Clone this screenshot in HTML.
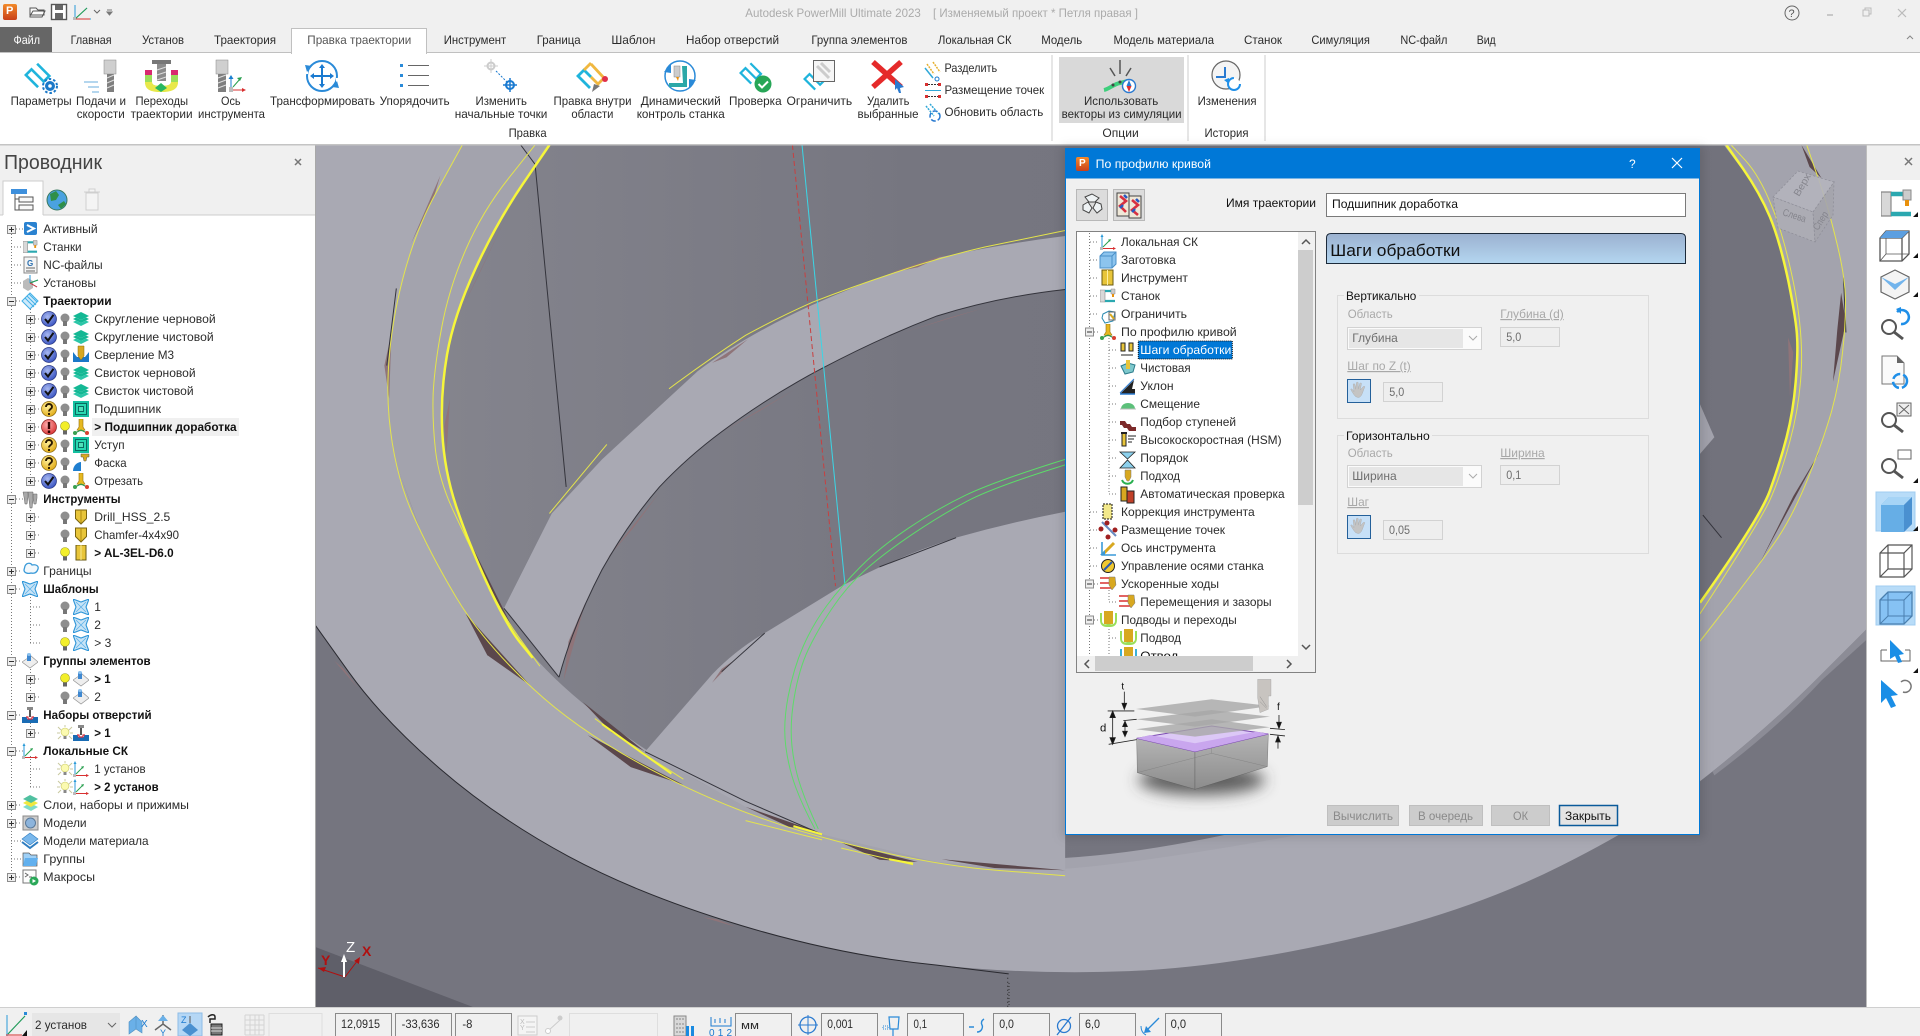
<!DOCTYPE html>
<html lang="ru"><head><meta charset="utf-8"><title>PowerMill</title>
<style>
html,body{margin:0;padding:0;background:#f0f0f0;overflow:hidden}
svg{display:block}
text{font:12px "Liberation Sans","Noto Sans CJK SC",sans-serif;fill:#2b2b2b}
.b{font-weight:bold;fill:#111}
.g{fill:#a8a8a8}
.d{fill:#6e6e6e}
.u{text-decoration:underline}
.n{vector-effect:non-scaling-stroke;fill:none}
.dot{fill:none;stroke:#777;stroke-dasharray:1 2}
</style></head><body>
<svg xmlns="http://www.w3.org/2000/svg" width="1920" height="1036" viewBox="0 0 1920 1036">
<defs>
<linearGradient id="gh" x1="0" y1="0" x2="0" y2="1"><stop offset="0" stop-color="#9bb1d0"/><stop offset="1" stop-color="#b4d6f0"/></linearGradient>
<linearGradient id="wl" x1="0" y1="0" x2="1" y2="0"><stop offset="0" stop-color="#84848d"/><stop offset=".35" stop-color="#767680"/><stop offset="1" stop-color="#72727c"/></linearGradient>
<linearGradient id="bxf" x1="0" y1="0" x2="0" y2="1"><stop offset="0" stop-color="#b4b4b4"/><stop offset="1" stop-color="#8c8c8c"/></linearGradient>
<linearGradient id="pi" x1="0" y1="0" x2="0" y2="1"><stop offset="0" stop-color="#f28a2a"/><stop offset="1" stop-color="#c8401a"/></linearGradient>
<radialGradient id="bl" cx=".4" cy=".35" r=".7"><stop offset="0" stop-color="#a8b8f0"/><stop offset="1" stop-color="#3550c0"/></radialGradient>
<radialGradient id="yl" cx=".4" cy=".35" r=".7"><stop offset="0" stop-color="#fff09a"/><stop offset="1" stop-color="#e0a810"/></radialGradient>
<radialGradient id="rd" cx=".4" cy=".35" r=".7"><stop offset="0" stop-color="#ffb0b0"/><stop offset="1" stop-color="#d83030"/></radialGradient>
<filter id="bb" x="-30%" y="-50%" width="160%" height="200%"><feGaussianBlur stdDeviation="5"/></filter>
<filter id="bb2" x="-40%" y="-80%" width="180%" height="260%"><feGaussianBlur stdDeviation="22"/></filter>
<symbol id="pl" viewBox="0 0 9 9"><rect x=".5" y=".5" width="8" height="8" fill="#eee" stroke="#8c8c8c"/><path d="M2 4.5h5M4.5 2v5" stroke="#333"/></symbol>
<symbol id="mn" viewBox="0 0 9 9"><rect x=".5" y=".5" width="8" height="8" fill="#eee" stroke="#8c8c8c"/><path d="M2 4.5h5" stroke="#333"/></symbol>
<symbol id="ck" viewBox="0 0 16 16"><circle cx="8" cy="8" r="7.5" fill="url(#bl)" stroke="#27357f" stroke-width=".7"/><path d="M4 8l3 3.5L12.500 3.800" fill="none" stroke="#111" stroke-width="2"/></symbol>
<symbol id="qq" viewBox="0 0 16 16"><circle cx="8" cy="8" r="7.500" fill="url(#yl)" stroke="#8a6a10" stroke-width=".7"/><path d="M5 6c0-4 6-4 6 0 0 2-3 2-3 4.500M8 12v2" fill="none" stroke="#2a1a00" stroke-width="1.900"/></symbol>
<symbol id="ex" viewBox="0 0 16 16"><circle cx="8" cy="8" r="7.500" fill="url(#rd)" stroke="#8a2020" stroke-width=".7"/><path d="M8 3v7M8 11.500v2.500" stroke="#300" stroke-width="2.400"/></symbol>
<symbol id="bg" viewBox="0 0 10 14"><circle cx="5" cy="5" r="4.500" fill="#8e8e8e"/><path d="M3 8h4v5H3z" fill="#777"/></symbol>
<symbol id="by" viewBox="0 0 10 14"><circle cx="5" cy="5" r="4.500" fill="#f2ee2a" stroke="#9a9a20" stroke-width=".6"/><path d="M3 9.500h4v4H3z" fill="#666"/></symbol>
<symbol id="sn" viewBox="0 0 16 16"><path d="M1 2l3 3M15 2l-3 3M0 8h3M13 8h3M1 14l3-3M15 14l-3-3M8 0v2" stroke="#c9c9a0"/><circle cx="8" cy="7" r="4" fill="#fbfab0" stroke="#c4c460" stroke-width=".6"/><path d="M6.500 11h3v3h-3z" fill="#888"/></symbol>
<symbol id="ly" viewBox="0 0 16 16"><path d="M8 1l8 4-8 4-8-4z" fill="#14b894"/><path d="M0 8l3-1.500L8 9l5-2.500L16 8l-8 4z" fill="#14b894"/><path d="M0 11l3-1.500L8 12l5-2.500 3 1.500-8 4z" fill="#2bc6a8"/></symbol>
<symbol id="sq" viewBox="0 0 16 16"><rect width="16" height="16" fill="#14c0a0"/><rect x="2.500" y="2.500" width="11" height="11" fill="#28d8b0" stroke="#0a6a60"/><rect x="5.500" y="5.500" width="5" height="5" fill="#50e0b8" stroke="#0a6a60"/></symbol>
<symbol id="cv" viewBox="0 0 16 16"><path d="M6 0h4v8l2 3-4 1-4-1 2-3z" fill="#e6b820" stroke="#94700c" stroke-width=".6"/><path d="M8 11L2 14M8 11l6 3" stroke="#2a9a50" stroke-width="1.200"/><circle cx="2" cy="14" r="2" fill="#3aa050"/><circle cx="14" cy="14" r="2" fill="#d84030"/></symbol>
<symbol id="tt" viewBox="0 0 14 16"><path d="M1.500 1h11v8.500L7 15 1.500 9.500z" fill="#e8c53a" stroke="#7a6410"/><path d="M7 1v13" stroke="#b08a10"/></symbol>
<symbol id="tf" viewBox="0 0 14 16"><rect x="2" y="0" width="10" height="15" fill="#e8c53a" stroke="#6a5a10"/><path d="M7 0v15" stroke="#f6e690"/></symbol>
<symbol id="xx" viewBox="0 0 16 16"><path d="M0 0l8 3 8-3-3 8 3 8-8-3-8 3 3-8z" fill="#c8e4f6" stroke="#2f96d8" stroke-width="1.100"/><path d="M3 3l10 10M13 3L3 13" stroke="#5cb0e8" stroke-width=".8"/></symbol>
<symbol id="fe" viewBox="0 0 16 16"><path d="M0 9l9-6 7 6-8 6z" fill="#eee" stroke="#999" stroke-width=".7"/><path d="M5 1h4v7H5z" fill="#3f88d0"/><ellipse cx="7" cy="1.500" rx="2" ry="1.500" fill="#8cc0ec"/></symbol>
<symbol id="hs" viewBox="0 0 16 16"><path d="M5 0h6v3H5z" fill="#888"/><path d="M7 3h2v7H7z" fill="#555"/><path d="M0 10h5v2h6v-2h5v6H0z" fill="#1a6cb4"/><path d="M4 10h2v2h4v-2h2" stroke="#d83040" stroke-width="1.200" fill="none"/></symbol>
<symbol id="cs" viewBox="0 0 16 16"><path d="M2 13V1" stroke="#2a9ad8"/><path d="M2 0l-1.500 3h3z" fill="#2a9ad8"/><path d="M3 13l7-7" stroke="#2aa050"/><path d="M11 5l-3 .8 2 2z" fill="#2aa050"/><path d="M3 14.500h11" stroke="#d83030"/><path d="M16 14.500l-3-1.500v3z" fill="#d83030"/><rect x="0" y="13" width="3" height="3" fill="#bbb"/></symbol>
<symbol id="zz" viewBox="0 0 32 32"><path d="M15 29L2 16 8 10 21 23 27 17 14 4" fill="none" stroke="#1fb4dc" stroke-width="2.800"/></symbol>
<symbol id="ml" viewBox="0 0 16 16"><path d="M0 2h5v12H0z" fill="#d8d8d8" stroke="#888" stroke-width=".6"/><path d="M5 3h8M5 13h10" stroke="#2ba8b0" stroke-width="2.200"/><path d="M11 1h4v5h-4z" fill="#ccc" stroke="#888" stroke-width=".5"/><path d="M12 6h2v3h-2z" fill="#e8900c"/></symbol>
<symbol id="hd" viewBox="0 0 24 24"><path d="M8 20c-3-3-5-7-6-9 1-1 2 0 4 3L5 5c1-1 2 0 2 0l1 6 1-8c1-1 2 0 2 0v8l2-7c1-1 2 0 2 0l-1.500 8L17 8c1-1 2 0 2 0l-3 8c-1 3-3 5-5 5z" fill="#c4c4c4" stroke="#aaa" stroke-width=".5"/></symbol>
</defs>

<!-- 3D SCENE -->
<rect x="315" y="145" width="1551" height="862" fill="#75757f"/>
<svg x="315" y="145" width="1551" height="862" viewBox="0 0 3242 1563" preserveAspectRatio="none">
<rect width="3242" height="1563" fill="#75757f"/>
<path d="M0,1454L0,1563L330,1563Z" fill="#5f5f69"/>
<path d="M0,0H3242V879L3144,964Q3047,1049 2921,1136Q2796,1224 2604,1307Q2412,1391 2157,1441Q1902,1491 1701,1498Q1500,1505 1300,1487Q1100,1470 890,1415Q680,1360 530,1290Q380,1220 260,1130Q140,1040 70,955L0,870Z" fill="#a9a9b3"/>
<path d="M308,0L254,85Q200,170 172,285Q145,400 155,495Q165,590 202,665Q240,740 295,820Q350,900 455,985Q560,1070 730,1145Q900,1220 1090,1262Q1280,1305 1424,1315Q1568,1325 1984,1262Q2400,1200 2600,1100Q2800,1000 2910,880Q3020,761 3055,716Q3090,671 3121,604Q3152,537 3170,483Q3187,429 3193,375Q3200,322 3199,278Q3198,235 3178,167Q3159,100 3138,50L3118,0Z" fill="#a3a3ad"/>
<path d="M490,0L435,70Q380,140 335,225Q290,310 276,380Q262,450 266,520Q270,590 295,655Q320,720 360,795Q400,870 455,925Q510,980 600,1040Q690,1100 795,1150Q900,1200 980,1225Q1060,1250 1314,1285Q1568,1320 1984,1235Q2400,1150 2600,1050Q2800,950 2910,813Q3020,677 3041,627Q3062,577 3076,530Q3090,483 3095,430Q3100,376 3098,349Q3097,322 3080,248Q3062,174 3041,130Q3020,87 2982,43L2945,0Z" fill="url(#wl)"/>
<path d="M395,840L495,668L600,570L800,410Q900,345 1040,290Q1170,240 1300,205Q1430,180 1568,165V262Q1430,275 1300,310Q1180,350 1060,405Q950,455 850,520Q780,565 720,620Q655,685 600,770Q540,870 510,965Z" fill="#a9a9b3"/>
<path d="M690,1100L830,960Q880,915 940,885L1100,800Q1220,745 1340,712Q1450,685 1568,665V1320L1300,1300L1060,1250L900,1200Z" fill="#a9a9b3"/>
<path d="M2895,470L2925,530L2895,560Z" fill="#a3a3ad"/>
<g fill="#8f7479">
<path d="M262,55L200,180L250,90Z"/><path d="M160,340L145,400L155,460Z"/><path d="M520,970L565,830L530,900Z"/><path d="M610,750L720,630L665,695Z"/><path d="M850,520L1000,445L930,482Z"/><path d="M1230,340L1400,295L1330,312Z"/><path d="M830,395L905,352L860,385Z"/><path d="M1200,232L1320,198L1260,222Z"/><path d="M40,935L90,985L60,950Z"/><path d="M810,1400L880,1418L840,1404Z"/><path d="M300,310L400,130L340,240Z"/><path d="M275,560L282,460L270,510Z"/><path d="M830,975L875,935L850,950Z"/><path d="M3079,349L3090,376L3083,456Z"/>
</g>
<g fill="#5b474c">
<path d="M175,590L235,735L200,650Z"/><path d="M330,730L410,870L360,800Z"/><path d="M315,850L450,980L360,925Z"/><path d="M560,1010L690,1100L620,1065Z"/><path d="M570,1070L770,1160L660,1128Z"/><path d="M900,1200L1050,1245L990,1236Z"/><path d="M1100,1265L1260,1300L1180,1296Z"/><path d="M1310,1295L1568,1315L1420,1311Z"/>
<path d="M3107,0L3149,60L3124,40Z"/><path d="M3190,268L3200,322L3173,429L3182,335Z"/><path d="M3145,557L3020,758L3090,637Z"/>
</g>
<path class="n" stroke="#34343c" stroke-width="1" d="M430,0L460,35L525,620"/>
<path class="n" stroke="#34343c" stroke-width="1" d="M510,965Q540,870 600,770Q655,685 720,620Q780,565 850,520Q950,455 1060,405Q1180,350 1300,310Q1430,275 1568,262"/>
<path class="n" stroke="#2a2a30" stroke-width="1" d="M0,870L70,955Q140,1040 260,1130Q380,1220 530,1290Q680,1360 890,1415Q1100,1470 1300,1487L1450,1503"/>
<path class="n" stroke="#34343c" stroke-width="1" d="M1180,765L1340,712M850,955L940,885M690,1100L900,1190L1060,1250"/>
<path class="n" stroke="#34343c" stroke-width="1" d="M395,840L510,965"/>
<path class="n" stroke="#34343c" stroke-width="1" d="M170,260L150,400M3200,340L3195,240M2901,671L2940,712"/>
<path class="n" d="M1018,0L1108,800" stroke="#3ad6e6" stroke-width="1"/>
<path class="n" d="M998,0L1088,800" stroke="#c84040" stroke-width="1" stroke-dasharray="5 3"/>
<g stroke="#e4e44c" stroke-width="1">
<path class="n" d="M308,0L254,85Q200,170 172,285Q145,400 155,495Q165,590 202,665Q240,740 295,820Q350,900 455,985Q560,1070 730,1145Q900,1220 1090,1262Q1280,1305 1424,1315L1568,1325"/>
<path class="n" d="M460,0L405,60Q350,120 315,190Q280,260 265,330Q250,400 247,450Q245,500 252,555Q260,610 290,665Q320,720 355,785Q390,850 430,897L470,945"/>
<path class="n" d="M740,442Q820,390 900,345Q970,312 1040,285Q1120,258 1200,235Q1300,205 1400,185L1568,155M490,668L610,543"/>
<path class="n" d="M3118,0L3138,50Q3159,100 3178,167Q3198,235 3199,278Q3200,322 3193,375Q3187,429 3170,483Q3152,537 3121,604Q3090,671 3055,716Q3020,761 2895,900"/>
<path class="n" d="M2960,0L2990,28Q3020,57 3044,109Q3069,161 3090,248Q3110,335 3107,402Q3104,470 3083,537Q3062,604 3041,644Q3020,684 2895,850"/>
<path class="n" d="M585,1040L680,1100L770,1150M900,1225L1060,1260M1100,1275L1250,1305"/>
</g>
<path class="n" stroke="#f6f63a" stroke-width="2.500" d="M490,0L435,70Q380,140 335,225Q290,310 276,380Q262,450 266,520Q270,590 295,655Q320,720 360,795Q400,870 427,900L455,930"/>
<path class="n" stroke="#f6f63a" stroke-width="2" d="M600,1050L680,1100L745,1140M1000,1235L1060,1250M1200,1295L1250,1303"/>
<path class="n" stroke="#f6f63a" stroke-width="2.500" d="M2950,0L2985,43Q3020,87 3041,130Q3062,174 3080,248Q3097,322 3098,349Q3100,376 3095,430Q3090,483 3076,530Q3062,577 3041,627Q3020,677 2895,830"/>
<path class="n" stroke="#5ddb6a" stroke-width="1" d="M1568,570Q1420,610 1360,635Q1300,660 1240,695Q1180,730 1140,765Q1100,800 1070,835Q1040,870 1020,910Q1000,950 989,1000Q978,1050 984,1090Q990,1130 1005,1165Q1020,1200 1045,1240"/>
<path class="n" stroke="#5ddb6a" stroke-width="1" d="M1568,580Q1420,620 1365,645Q1310,670 1250,705Q1190,740 1151,770Q1112,800 1081,840Q1050,880 1031,915Q1012,950 1002,1000Q992,1050 997,1090Q1002,1130 1016,1165Q1030,1200 1052,1240"/>
<path class="n" stroke="#222" stroke-width="1" stroke-dasharray="1 3" d="M1448,1510V1563"/>
<path d="M3242,879L3144,964Q3047,1049 2921,1136L2925,1143Q3060,1055 3150,970L3242,898Z" fill="#8c8c96"/>
</svg>
<!-- triad -->
<path d="M345,977L318,968M345,977L358,960" stroke="#b01010" fill="none"/><path d="M318,968l8-1-2 5zM360,957l-1 7-5-3z" fill="#b01010"/>
<path d="M344,977V960" stroke="#fff" stroke-width="2"/><path d="M344,954l-3 8h6z" fill="#fff"/>
<text x="346" y="952" style="font-size:15px;fill:#fff">Z</text><text x="362" y="956" style="font-size:14px;fill:#b01010;font-weight:bold">X</text><text x="321" y="965" style="font-size:14px;fill:#b01010;font-weight:bold">Y</text>
<!-- view cube -->
<g fill-opacity=".9" stroke="#8c8c96" stroke-width=".7" stroke-dasharray="2 2">
<path d="M1773,197L1798,171L1834,182L1813,212Z" fill="#b4b4bc"/>
<path d="M1773,197L1813,212L1815,242L1778,228Z" fill="#adadb5"/>
<path d="M1813,212L1834,182L1833,215L1815,242Z" fill="#a4a4ac"/>
</g>
<text x="0" y="0" transform="translate(1799,197) rotate(-60)" textLength="24" lengthAdjust="spacingAndGlyphs" style="font-size:10px;fill:#85858d">Верх</text>
<text x="0" y="0" transform="translate(1782,215) rotate(18)" textLength="24" lengthAdjust="spacingAndGlyphs" style="font-size:10px;fill:#85858d">Слева</text>
<text x="0" y="0" transform="translate(1818,231) rotate(-58)" textLength="20" lengthAdjust="spacingAndGlyphs" style="font-size:10px;fill:#85858d">Спер</text>

<!-- right panel -->
<rect x="1866" y="145" width="54" height="862" fill="#fff"/>
<rect x="1866" y="145" width="54" height="35" fill="#f0f0f0"/>
<rect x="1866" y="145" width="1" height="862" fill="#bdbdbd"/>
<path d="M1905,158l7,7M1912,158l-7,7" stroke="#777" stroke-width="1.500"/>
<use href="#ml" x="1881" y="188" width="32" height="32"/>
<g fill="#fff" stroke="#555" stroke-width="1.300">
<path d="M1880,238l6-7h23v23l-7,7h-22z"/><path d="M1880,238h22v23M1902,238l7-7" fill="none"/><path d="M1880,261l6-7h23M1886,231v23" fill="none" stroke-width=".8"/>
</g>
<path d="M1880,238l6-7h23l-7,7z" fill="#5c9fe0"/>
<path d="M1881,277l14-7 14,7v15l-14,7-14-7z" fill="#f4f4f4" stroke="#666" stroke-width="1.200"/><path d="M1881,277l14,7 14-7-14,13z" fill="#72b4ec"/>
<circle cx="1889" cy="327" r="7" fill="none" stroke="#555" stroke-width="2"/><path d="M1894,332l9,7" stroke="#555" stroke-width="3"/><path d="M1897,312a7,7 0 1 1 4,12" fill="none" stroke="#1f8fe8" stroke-width="2.500"/><path d="M1896,309l5,-2v7z" fill="#1f8fe8"/>
<path d="M1882,356h15l7,7v21h-22z" fill="#fafafa" stroke="#777"/><path d="M1897,356l7,7h-7z" fill="#666"/><circle cx="1900" cy="381" r="7" fill="none" stroke="#1f8fe8" stroke-width="2.500" stroke-dasharray="9 3"/>
<circle cx="1889" cy="420" r="7" fill="none" stroke="#555" stroke-width="2"/><path d="M1894,425l9,7" stroke="#555" stroke-width="3"/><rect x="1897" y="403" width="14" height="13" fill="#eee" stroke="#666"/><path d="M1899,405l10,9M1909,405l-10,9" stroke="#666"/>
<circle cx="1889" cy="466" r="7" fill="none" stroke="#555" stroke-width="2"/><path d="M1894,471l9,7" stroke="#555" stroke-width="3"/><rect x="1898" y="450" width="13" height="9" fill="#fff" stroke="#666"/>
<rect x="1876" y="492" width="39" height="39" fill="#b8dcf8" stroke="#a0ccf0"/><path d="M1881,505l8-8h23v27l-8,8h-23z" fill="#66aee6"/><path d="M1881,505l8-8h23l-8,8z" fill="#a6d4f6"/><path d="M1904,505l8-8v27l-8,8z" fill="#4a90d0"/>
<g fill="none" stroke="#555" stroke-width="1.200"><path d="M1880,553l8-8h24v24l-8,8h-24zM1880,553h24v24M1904,553l8-8M1880,577l8-8h24M1888,545v24"/></g>
<rect x="1876" y="586" width="39" height="39" fill="#b8dcf8" stroke="#a0ccf0"/><path d="M1880,600l8-8h24v24l-8,8h-24z" fill="#86c2f4" stroke="#4a7faf" stroke-width="1.300"/><path d="M1880,600h24v24M1904,600l8-8M1880,624l8-8h24M1888,592v24" fill="none" stroke="#4a7faf"/>
<path d="M1881,650v11h29v-11" fill="none" stroke="#666"/><path d="M1890,640l14,14-5,1 3,7-4,1-3-7-5,3z" fill="#1a8ee6"/><path d="M1881,650h6M1905,650h5" stroke="#666"/>
<path d="M1881,680l17,15-7,1 5,10-5,2-5-10-5,5z" fill="#1a8ee6"/><path d="M1901,682a6,6 0 1 1 2,10" fill="none" stroke="#777" stroke-width="1.500"/>
<g fill="#111"><path d="M1918,217l-5,0 5-5zM1918,258l-5,0 5-5zM1918,297l-5,0 5-5zM1918,483l-5,0 5-5zM1918,531l-5,0 5-5zM1918,673l-5,0 5-5z"/></g>

<!-- left panel -->
<rect x="0" y="145" width="315" height="70" fill="#f0f0f0"/>
<rect x="0" y="215" width="315" height="792" fill="#fff"/>
<rect x="315" y="145" width="1" height="862" fill="#a8a8a8"/>
<text x="4" y="169" textLength="98" lengthAdjust="spacingAndGlyphs" style="font-size:20px;fill:#444">Проводник</text>
<path d="M295,159l6,6M301,159l-6,6" stroke="#777" stroke-width="1.500"/>
<path d="M3,215V181H43V215" fill="#fff" stroke="#ccc"/>
<path d="M0,215H3M43,215H315" stroke="#ccc"/>
<rect x="11" y="189" width="16" height="5" fill="#3d8fdc"/><path d="M15,194v16h4M15,199h4" stroke="#555" fill="none"/><rect x="19" y="197" width="14" height="5" fill="#f8f8f8" stroke="#555"/><rect x="19" y="205" width="14" height="5" fill="#f8f8f8" stroke="#555"/>
<circle cx="57" cy="200" r="10" fill="#4aa2e0" stroke="#3a7a60"/><path d="M50,194l6-3 3,4-3,5-5,1zM58,205l6-4 2,3-5,5z" fill="#2f8f48"/>
<path d="M86,193h12v17H86zM84,192h16M89,192v-3h6v3" fill="#f4f4f4" stroke="#cfcfcf"/>
<!-- tree lines -->
<path class="dot" d="M11.500,234V877M30.500,306V481M30.500,504V553M30.500,594V643M30.500,666V697M30.500,720V733M30.500,756V787"/>
<path class="dot" d="M16,229h8M11,247h12M11,265h12M11,283h12M16,301h7M35,319h6M35,337h6M35,355h6M35,373h6M35,391h6M35,409h6M35,427h6M35,445h6M35,463h6M35,481h6M16,499h7M35,517h6M35,535h6M35,553h6M16,571h6M16,589h6M30,607h11M30,625h11M30,643h11M16,661h6M35,679h6M35,697h6M16,715h6M35,733h6M16,751h7M30,769h11M30,787h11M16,805h6M16,823h6M11,841h11M11,859h11M16,877h6"/>
<g>
<use href="#pl" x="7" y="225" width="9" height="9"/><use href="#mn" x="7" y="297" width="9" height="9"/><use href="#mn" x="7" y="495" width="9" height="9"/><use href="#pl" x="7" y="567" width="9" height="9"/><use href="#mn" x="7" y="585" width="9" height="9"/><use href="#mn" x="7" y="657" width="9" height="9"/><use href="#mn" x="7" y="711" width="9" height="9"/><use href="#mn" x="7" y="747" width="9" height="9"/><use href="#pl" x="7" y="801" width="9" height="9"/><use href="#pl" x="7" y="819" width="9" height="9"/><use href="#pl" x="7" y="873" width="9" height="9"/>
<use href="#pl" x="26" y="315" width="9" height="9"/><use href="#pl" x="26" y="333" width="9" height="9"/><use href="#pl" x="26" y="351" width="9" height="9"/><use href="#pl" x="26" y="369" width="9" height="9"/><use href="#pl" x="26" y="387" width="9" height="9"/><use href="#pl" x="26" y="405" width="9" height="9"/><use href="#pl" x="26" y="423" width="9" height="9"/><use href="#pl" x="26" y="441" width="9" height="9"/><use href="#pl" x="26" y="459" width="9" height="9"/><use href="#pl" x="26" y="477" width="9" height="9"/><use href="#pl" x="26" y="513" width="9" height="9"/><use href="#pl" x="26" y="531" width="9" height="9"/><use href="#pl" x="26" y="549" width="9" height="9"/><use href="#pl" x="26" y="675" width="9" height="9"/><use href="#pl" x="26" y="693" width="9" height="9"/><use href="#pl" x="26" y="729" width="9" height="9"/>
</g>
<!-- L0 icons -->
<rect x="24" y="222" width="13" height="13" rx="2" fill="#2a82d0"/><path d="M27,225l7,3.500-7,3.500" fill="none" stroke="#fff" stroke-width="2"/>
<use href="#ml" x="23" y="239" width="15" height="16"/>
<rect x="24" y="257" width="13" height="16" fill="#f4f4f4" stroke="#888"/><text x="27" y="266" style="font-size:8px;fill:#2a6fb0;font-weight:bold">G</text><path d="M26,268h9M26,271h9" stroke="#666"/>
<path d="M23,281l5-3 5,3v7l-5,3-5-3z" fill="#bbb"/><path d="M30,283V275M30,283l8-3M30,283l7,4" stroke="#2a9ad8"/><path d="M30,283l8-3" stroke="#2aa050"/><path d="M30,283l7,4" stroke="#d83030"/>
<path d="M30,293l8,8-8,8-8-8z" fill="#cfeafb" stroke="#42b0e6"/><path d="M25,298l9,9M27,296l9,9M29,294l8,8" stroke="#42b0e6"/>
<path d="M23,492h5v5l-1,7h-2l-1-7zM28,492h5v8l-1,8h-2l-1-8zM33,494h4v4l-1,6h-2l-1-6z" fill="#a8a8a8" stroke="#666" stroke-width=".5"/>
<path d="M25,566c2-4,6-3,7-1 4-1,7,1,6,4s-3,5-7,4c-3,1-7,0-7-3z" fill="#f2f8fc" stroke="#3a9ad8" stroke-width="1.300"/>
<use href="#xx" x="22" y="581" width="16" height="16"/>
<use href="#fe" x="22" y="653" width="16" height="16"/>
<use href="#hs" x="22" y="707" width="16" height="16"/>
<use href="#cs" x="22" y="743" width="16" height="16"/>
<path d="M23,807l7-4 8,4-7,4z" fill="#80dcc8"/><path d="M23,803l7-4 8,4-7,4z" fill="#f0e840"/><path d="M23,799l7-4 8,4-7,4z" fill="#50c0a0"/>
<rect x="23" y="816" width="15" height="14" fill="#ccc" stroke="#888"/><circle cx="30.500" cy="823" r="5" fill="#8cb4dc" stroke="#5a7a9a"/>
<path d="M30,833l8,6-8,6-8-6z" fill="#7ab8ec" stroke="#2f7dc0" stroke-width=".6"/><path d="M22,842l8,6 8-6" fill="none" stroke="#2f7dc0" stroke-width="2"/>
<path d="M23,853h6l2,2h6v11H23z" fill="#9fd0f6" stroke="#555" stroke-width=".7"/><path d="M25,858h13l-2,8H23z" fill="#62b0ee"/>
<rect x="23" y="870" width="13" height="13" fill="#fdfdfd" stroke="#777"/><path d="M25,873l3,2-3,2M29,877h3" stroke="#666" fill="none"/><circle cx="34" cy="881" r="4.500" fill="#2aa858"/><path d="M32.500,879l3.500,2-3.500,2z" fill="#fff"/>
<!-- L1 icons -->
<use href="#ck" x="41" y="311" width="16" height="16"/><use href="#ck" x="41" y="329" width="16" height="16"/><use href="#ck" x="41" y="347" width="16" height="16"/><use href="#ck" x="41" y="365" width="16" height="16"/><use href="#ck" x="41" y="383" width="16" height="16"/><use href="#qq" x="41" y="401" width="16" height="16"/><use href="#ex" x="41" y="419" width="16" height="16"/><use href="#qq" x="41" y="437" width="16" height="16"/><use href="#qq" x="41" y="455" width="16" height="16"/><use href="#ck" x="41" y="473" width="16" height="16"/>
<g><use href="#bg" x="60" y="313" width="10" height="14"/><use href="#bg" x="60" y="331" width="10" height="14"/><use href="#bg" x="60" y="349" width="10" height="14"/><use href="#bg" x="60" y="367" width="10" height="14"/><use href="#bg" x="60" y="385" width="10" height="14"/><use href="#bg" x="60" y="403" width="10" height="14"/><use href="#by" x="60" y="421" width="10" height="14"/><use href="#bg" x="60" y="439" width="10" height="14"/><use href="#bg" x="60" y="457" width="10" height="14"/><use href="#bg" x="60" y="475" width="10" height="14"/><use href="#bg" x="60" y="511" width="10" height="14"/><use href="#bg" x="60" y="529" width="10" height="14"/><use href="#by" x="60" y="547" width="10" height="14"/><use href="#bg" x="60" y="601" width="10" height="14"/><use href="#bg" x="60" y="619" width="10" height="14"/><use href="#by" x="60" y="637" width="10" height="14"/><use href="#by" x="60" y="673" width="10" height="14"/><use href="#bg" x="60" y="691" width="10" height="14"/></g>
<use href="#ly" x="73" y="311" width="16" height="16"/><use href="#ly" x="73" y="329" width="16" height="16"/>
<path d="M73,352v10h16v-10l-4,5h-8z" fill="#1a78c8"/><path d="M78,346h6v10l-3,4-3-4z" fill="#d8a820" stroke="#8a6a10" stroke-width=".5"/>
<use href="#ly" x="73" y="365" width="16" height="16"/><use href="#ly" x="73" y="383" width="16" height="16"/>
<use href="#sq" x="73" y="401" width="16" height="16"/><use href="#cv" x="73" y="419" width="16" height="16"/><use href="#sq" x="73" y="437" width="16" height="16"/>
<path d="M73,471c0-6 5-9 8-9v9z" fill="#1f7fd0"/><path d="M81,454h8v3h-2l-1,4h-2l-1-4h-2z" fill="#d8a820" stroke="#555" stroke-width=".5"/>
<use href="#cv" x="73" y="473" width="16" height="16"/>
<use href="#tt" x="74" y="509" width="14" height="16"/><use href="#tt" x="74" y="527" width="14" height="16"/><use href="#tf" x="74" y="545" width="14" height="16"/>
<use href="#xx" x="73" y="599" width="16" height="16"/><use href="#xx" x="73" y="617" width="16" height="16"/><use href="#xx" x="73" y="635" width="16" height="16"/>
<use href="#fe" x="73" y="671" width="16" height="16"/><use href="#fe" x="73" y="689" width="16" height="16"/>
<use href="#sn" x="57" y="725" width="16" height="16"/><use href="#hs" x="73" y="725" width="16" height="16"/>
<use href="#sn" x="57" y="761" width="16" height="16"/><use href="#cs" x="73" y="761" width="16" height="16"/>
<use href="#sn" x="57" y="779" width="16" height="16"/><use href="#cs" x="73" y="779" width="16" height="16"/>
<rect x="92" y="418" width="147" height="18" fill="#f0f0f0"/>
<!-- tree text -->
<text x="43.300" y="233" textLength="54.300" lengthAdjust="spacingAndGlyphs">Активный</text>
<text x="43.300" y="251" textLength="38.300" lengthAdjust="spacingAndGlyphs">Станки</text>
<text x="43.300" y="269" textLength="59.300" lengthAdjust="spacingAndGlyphs">NC-файлы</text>
<text x="43.300" y="287" textLength="52.700" lengthAdjust="spacingAndGlyphs">Установы</text>
<text class="b" x="43.300" y="305" textLength="68.300" lengthAdjust="spacingAndGlyphs">Траектории</text>
<text x="94.300" y="323" textLength="121.300" lengthAdjust="spacingAndGlyphs">Скругление черновой</text>
<text x="94.300" y="341" textLength="119.300" lengthAdjust="spacingAndGlyphs">Скругление чистовой</text>
<text x="94.300" y="359" textLength="79.700" lengthAdjust="spacingAndGlyphs">Сверление М3</text>
<text x="94.300" y="377" textLength="101.300" lengthAdjust="spacingAndGlyphs">Свисток черновой</text>
<text x="94.300" y="395" textLength="99.300" lengthAdjust="spacingAndGlyphs">Свисток чистовой</text>
<text x="94.300" y="413" textLength="66.700" lengthAdjust="spacingAndGlyphs">Подшипник</text>
<text class="b" x="94.300" y="431" textLength="142.300" lengthAdjust="spacingAndGlyphs">&gt; Подшипник доработка</text>
<text x="94.300" y="449" textLength="30.300" lengthAdjust="spacingAndGlyphs">Уступ</text>
<text x="94.300" y="467" textLength="32.300" lengthAdjust="spacingAndGlyphs">Фаска</text>
<text x="94.300" y="485" textLength="48.700" lengthAdjust="spacingAndGlyphs">Отрезать</text>
<text class="b" x="43.300" y="503" textLength="77.300" lengthAdjust="spacingAndGlyphs">Инструменты</text>
<text x="94.300" y="521" textLength="76" lengthAdjust="spacingAndGlyphs">Drill_HSS_2.5</text>
<text x="94.300" y="539" textLength="84.700" lengthAdjust="spacingAndGlyphs">Chamfer-4x4x90</text>
<text class="b" x="94.300" y="557" textLength="79.300" lengthAdjust="spacingAndGlyphs">&gt; AL-3EL-D6.0</text>
<text x="43.300" y="575" textLength="48.300" lengthAdjust="spacingAndGlyphs">Границы</text>
<text class="b" x="43.300" y="593" textLength="55.300" lengthAdjust="spacingAndGlyphs">Шаблоны</text>
<text x="94.300" y="611">1</text><text x="94.300" y="629">2</text>
<text x="94.300" y="647" textLength="17" lengthAdjust="spacingAndGlyphs">&gt; 3</text>
<text class="b" x="43.300" y="665" textLength="107.300" lengthAdjust="spacingAndGlyphs">Группы элементов</text>
<text class="b" x="94.300" y="683" textLength="16.300" lengthAdjust="spacingAndGlyphs">&gt; 1</text>
<text x="94.300" y="701">2</text>
<text class="b" x="43.300" y="719" textLength="108.300" lengthAdjust="spacingAndGlyphs">Наборы отверстий</text>
<text class="b" x="94.300" y="737" textLength="16.300" lengthAdjust="spacingAndGlyphs">&gt; 1</text>
<text class="b" x="43.300" y="755" textLength="84.700" lengthAdjust="spacingAndGlyphs">Локальные СК</text>
<text x="94.300" y="773" textLength="51.300" lengthAdjust="spacingAndGlyphs">1 установ</text>
<text class="b" x="94.300" y="791" textLength="64.300" lengthAdjust="spacingAndGlyphs">&gt; 2 установ</text>
<text x="43.300" y="809" textLength="145.700" lengthAdjust="spacingAndGlyphs">Слои, наборы и прижимы</text>
<text x="43.300" y="827" textLength="43.300" lengthAdjust="spacingAndGlyphs">Модели</text>
<text x="43.300" y="845" textLength="105.300" lengthAdjust="spacingAndGlyphs">Модели материала</text>
<text x="43.300" y="863" textLength="41.700" lengthAdjust="spacingAndGlyphs">Группы</text>
<text x="43.300" y="881" textLength="51.700" lengthAdjust="spacingAndGlyphs">Макросы</text>

<!-- top chrome -->
<rect x="0" y="0" width="1920" height="52" fill="#f0f0f0"/>
<rect x="0" y="52" width="1920" height="92" fill="#fff"/>
<rect x="0" y="52" width="1920" height="1" fill="#c0c0c0"/>
<rect x="0" y="144" width="1920" height="1.500" fill="#c4c4c4"/>
<rect x="0" y="27" width="52" height="25" fill="#666"/>
<rect x="291.500" y="28.500" width="135" height="25" fill="#fff" stroke="#c0c0c0"/><rect x="292" y="50" width="134" height="5" fill="#fff"/>
<!-- QAT -->
<rect x="3" y="4" width="14" height="16" rx="2" fill="url(#pi)"/><text x="6" y="14" style="font-size:11px;fill:#fff;font-weight:bold">P</text>
<path d="M30,8h6l2,2h6v5H30zM30,16l3-5h12l-3,6H30z" fill="#fafafa" stroke="#555"/>
<rect x="51.500" y="4.500" width="15" height="15" fill="#fff" stroke="#555" stroke-width="1.400"/><rect x="55" y="5" width="8" height="5" fill="#666"/><rect x="55" y="13" width="8" height="6" fill="#666"/>
<path d="M75,5V20M75,19L87,8M75,19H91" stroke="#2a9ad8" fill="none"/><path d="M75,19L87,8" stroke="#2aa050"/><path d="M75,19H90" stroke="#d83030"/><rect x="73" y="17" width="3" height="3" fill="#bbb"/>
<path d="M94,10l3,3 3-3" fill="none" stroke="#666"/><path d="M107,10h5M107,12l2.500,3 2.500-3z" fill="#777" stroke="#777"/>
<text x="745.300" y="17" textLength="175.500" lengthAdjust="spacingAndGlyphs" style="fill:#ababab">Autodesk PowerMill Ultimate 2023</text>
<text x="933" y="17" textLength="205" lengthAdjust="spacingAndGlyphs" style="fill:#ababab">[ Изменяемый проект * Петля правая ]</text>
<circle cx="1792" cy="13" r="7" fill="none" stroke="#666"/><text x="1788.500" y="17" style="font-size:11px;fill:#555">?</text>
<path d="M1827,15h6" stroke="#bbb" stroke-width="1.500"/><path d="M1863,10h6v6h-6zM1865,10V8h6v6h-2" fill="none" stroke="#bbb"/><path d="M1898,9l8,8M1906,9l-8,8" stroke="#bbb" stroke-width="1.200"/>
<path d="M1907,39l3-3 3,3" fill="none" stroke="#888"/>
<!-- tabs -->
<text x="13.500" y="44" textLength="26.500" lengthAdjust="spacingAndGlyphs" style="fill:#fff">Файл</text>
<text x="70.600" y="44" textLength="41" lengthAdjust="spacingAndGlyphs">Главная</text>
<text x="142" y="44" textLength="42" lengthAdjust="spacingAndGlyphs">Установ</text>
<text x="214" y="44" textLength="62" lengthAdjust="spacingAndGlyphs">Траектория</text>
<text x="307.300" y="44" textLength="104" lengthAdjust="spacingAndGlyphs" style="fill:#555">Правка траектории</text>
<text x="443.700" y="44" textLength="62.500" lengthAdjust="spacingAndGlyphs">Инструмент</text>
<text x="536.700" y="44" textLength="44" lengthAdjust="spacingAndGlyphs">Граница</text>
<text x="611.400" y="44" textLength="44" lengthAdjust="spacingAndGlyphs">Шаблон</text>
<text x="686" y="44" textLength="93" lengthAdjust="spacingAndGlyphs">Набор отверстий</text>
<text x="811.400" y="44" textLength="96" lengthAdjust="spacingAndGlyphs">Группа элементов</text>
<text x="938" y="44" textLength="73.500" lengthAdjust="spacingAndGlyphs">Локальная СК</text>
<text x="1041.200" y="44" textLength="41" lengthAdjust="spacingAndGlyphs">Модель</text>
<text x="1113.500" y="44" textLength="100.500" lengthAdjust="spacingAndGlyphs">Модель материала</text>
<text x="1244" y="44" textLength="38" lengthAdjust="spacingAndGlyphs">Станок</text>
<text x="1311.400" y="44" textLength="58.500" lengthAdjust="spacingAndGlyphs">Симуляция</text>
<text x="1400.400" y="44" textLength="47" lengthAdjust="spacingAndGlyphs">NC-файл</text>
<text x="1476.700" y="44" textLength="19" lengthAdjust="spacingAndGlyphs">Вид</text>

<!-- ribbon -->
<rect x="1059" y="57" width="125" height="66" fill="#d9d9d9"/>
<path d="M1052,55V141M1188,55V141M1265,55V141" stroke="#ccc"/>
<!-- ribbon icons -->
<use href="#zz" x="24" y="60" width="30" height="30"/>
<circle cx="50" cy="86" r="5" fill="#1a78c8"/><circle cx="50" cy="86" r="7" fill="none" stroke="#1a78c8" stroke-width="2" stroke-dasharray="2.500 2"/><circle cx="50" cy="86" r="1.800" fill="#fff"/>
<path d="M84,82h14M88,87h11M92,92h7" stroke="#86bde4" stroke-width="1.200" fill="none"/><rect x="104" y="60" width="12" height="14" fill="#cfcfcf" stroke="#888" stroke-width=".5"/><rect x="107" y="74" width="7" height="18" fill="#7f7f7f"/><path d="M107,78l7-3M107,83l7-3M107,88l7-3" stroke="#ddd"/>
<path d="M145,70v11c0,8 6,11 16,11s17-3 17-11V70h-7v12c0,3-4,4-10,4s-9-1-9-4V70z" fill="#9adf5a"/><path d="M145,82c0,8 6,10 16,10s17-2 17-10l-7,0c0,3-4,4-10,4s-9-1-9-4z" fill="#e8e84a"/><path d="M155,88l6-5 6,5-6,4z" fill="#28b860"/><rect x="145" y="70" width="7" height="5" fill="#d82a70"/><rect x="171" y="70" width="7" height="5" fill="#d82a70"/><rect x="152" y="60" width="19" height="4" fill="#777"/><rect x="157" y="64" width="9" height="17" fill="#8c8c8c"/><path d="M157,70l9-3M157,75l9-3M157,80l9-3" stroke="#ddd"/>
<rect x="216" y="60" width="12" height="14" fill="#cfcfcf" stroke="#888" stroke-width=".5"/><rect x="218" y="74" width="8" height="18" fill="#7f7f7f"/><path d="M218,78l8-3M218,83l8-3M218,88l8-3" stroke="#ddd"/><path d="M231,89V77" stroke="#1a7fd0"/><path d="M231,75l-2.500,4h5z" fill="#1a7fd0"/><path d="M233,87l7-8" stroke="#2aa050"/><path d="M242,77l-5,1 3,3z" fill="#2aa050"/><path d="M233,90h11" stroke="#d83030"/><path d="M246,90l-4-2v4z" fill="#d83030"/><rect x="229" y="87" width="4" height="5" fill="#bbb"/>
<circle cx="322" cy="76" r="15" fill="none" stroke="#2a8ad8" stroke-width="2"/><rect x="300" y="66" width="8" height="8" fill="#fff"/><rect x="336" y="78" width="8" height="8" fill="#fff"/><path d="M307,72l5-6-7-1zM337,81l-5,6 7,1z" fill="#2a8ad8"/><path d="M322,66v20M312,76h20" stroke="#1a7ad0" stroke-width="2"/><path d="M322,64l-3,4h6zM322,88l-3-4h6zM310,76l4-3v6zM334,76l-4-3v6z" fill="#1a7ad0"/>
<rect x="400" y="64" width="3" height="3" fill="#2a8ad8"/><rect x="400" y="74" width="3" height="3" fill="#2a8ad8"/><rect x="400" y="84" width="3" height="3" fill="#2a8ad8"/><path d="M408,65.500h21M408,75.500h21M408,85.500h21" stroke="#666"/>
<circle cx="491" cy="66" r="3.500" fill="none" stroke="#ccc" stroke-width="2"/><path d="M491,59v14M484,66h14" stroke="#ccc"/><path d="M496,71l11,11" stroke="#1a7ad0" stroke-dasharray="2 1.500"/><circle cx="510" cy="85" r="4" fill="none" stroke="#1a7ad0" stroke-width="2"/><path d="M510,78v14M503,85h14" stroke="#1a7ad0" stroke-width="1.500"/>
<path d="M590,88L578,76 584,70 591,77" fill="none" stroke="#1fb4dc" stroke-width="2.800"/><path d="M591,77L598,84 604,78 591,64" fill="none" stroke="#f0b840" stroke-width="2.800"/><path d="M584,70L591,63" fill="none" stroke="#f0b840" stroke-width="2.800"/><path d="M600,86l-8,6 2-8z" fill="#777"/><circle cx="605" cy="79" r="3" fill="#e0304a"/>
<circle cx="680" cy="76" r="15" fill="none" stroke="#2a8ad8" stroke-width="1.500"/><path d="M664,72l7-8v9zM696,80l-7,8v-9z" fill="#2a8ad8"/><rect x="674" y="66" width="6" height="11" fill="#ccc" stroke="#888" stroke-width=".5"/><path d="M682,66h5v21h-18v-4h14z" fill="#2ba8a8"/><path d="M676,77h3l-1,4z" fill="#e8900c"/>
<use href="#zz" x="739" y="60" width="26" height="26"/><circle cx="763" cy="84" r="8.500" fill="#27a657"/><path d="M758.500,84l3.500,3.500 6-6" fill="none" stroke="#fff" stroke-width="2"/>
<use href="#zz" x="803" y="66" width="26" height="26"/><rect x="813.500" y="60.500" width="21" height="21" fill="#f6f6f6" stroke="#666"/><path d="M817,66l12,12M821,63l9,9" stroke="#ccc" stroke-width="3"/>
<path d="M873,62l28,25M901,62l-28,25" stroke="#e52a2a" stroke-width="5.500"/><path d="M895,79l9,8-4,1 1,5-2,0-2-5-2,2z" fill="#2a7ad0"/>
<path d="M927,64l7,10M933,62l7,10" stroke="#e6b030" stroke-width="1.500" stroke-dasharray="2 1"/><path d="M925,68l8,10" stroke="#30a8d8" stroke-width="1.500"/><circle cx="937" cy="79" r="2" fill="none" stroke="#1a7ad0"/>
<g fill="#d83030"><rect x="925" y="83" width="3" height="3"/><rect x="938" y="83" width="3" height="3"/><rect x="925" y="95" width="3" height="3"/><rect x="938" y="95" width="3" height="3"/></g><path d="M928,84.500h10M928,96.500h10M925,90.500h16" stroke="#333" stroke-dasharray="2 1"/><path d="M925,90.500h16" stroke="#30a8d8"/>
<path d="M926,106l8,10M930,104l9,10" stroke="#30a8d8" stroke-width="1.500" stroke-dasharray="2 1"/><circle cx="935" cy="116" r="5" fill="none" stroke="#2a7ad0" stroke-width="1.500" stroke-dasharray="5 2"/>
<path d="M1110,68l5,8M1120,60v14M1131,68l-5,8" stroke="#555" stroke-width="1.500"/><path d="M1104,90c5-1 10-6 16-7l8,-2" stroke="#3ecf7c" stroke-width="4" fill="none"/><circle cx="1113" cy="85" r="1.500" fill="#444"/><circle cx="1120" cy="82" r="1.500" fill="#444"/><circle cx="1128" cy="82" r="1.500" fill="#444"/><circle cx="1129" cy="86" r="6.500" fill="#fff" stroke="#2a7ad0" stroke-width="1.400"/><path d="M1129,80l2.500,6h-5z" fill="#2a7ad0"/><path d="M1129,92l-2.500-6h5z" fill="#e03030"/>
<circle cx="1226" cy="75" r="14" fill="#f4f4f4" stroke="#666" stroke-width="1.200"/><path d="M1225,67v10h-9" fill="none" stroke="#2a7ad0" stroke-width="2"/><circle cx="1234" cy="84" r="6" fill="#fff" stroke="#1f8fe8" stroke-width="2" stroke-dasharray="28 10"/><path d="M1224,80l5-2v6z" fill="#1f8fe8"/>
<!-- ribbon text -->
<text x="10.600" y="105" textLength="61" lengthAdjust="spacingAndGlyphs">Параметры</text>
<text x="76" y="105" textLength="50" lengthAdjust="spacingAndGlyphs">Подачи и</text>
<text x="76.700" y="118" textLength="48" lengthAdjust="spacingAndGlyphs">скорости</text>
<text x="135.500" y="105" textLength="52.600" lengthAdjust="spacingAndGlyphs">Переходы</text>
<text x="130.600" y="118" textLength="62" lengthAdjust="spacingAndGlyphs">траектории</text>
<text x="221" y="105" textLength="19.600" lengthAdjust="spacingAndGlyphs">Ось</text>
<text x="198" y="118" textLength="67" lengthAdjust="spacingAndGlyphs">инструмента</text>
<text x="270" y="105" textLength="105" lengthAdjust="spacingAndGlyphs">Трансформировать</text>
<text x="379.600" y="105" textLength="70" lengthAdjust="spacingAndGlyphs">Упорядочить</text>
<text x="475.500" y="105" textLength="51.400" lengthAdjust="spacingAndGlyphs">Изменить</text>
<text x="454.700" y="118" textLength="92.700" lengthAdjust="spacingAndGlyphs">начальные точки</text>
<text x="553.500" y="105" textLength="78" lengthAdjust="spacingAndGlyphs">Правка внутри</text>
<text x="571.400" y="118" textLength="42" lengthAdjust="spacingAndGlyphs">области</text>
<text x="508.600" y="137" textLength="38" lengthAdjust="spacingAndGlyphs">Правка</text>
<text x="640.800" y="105" textLength="80" lengthAdjust="spacingAndGlyphs">Динамический</text>
<text x="636.700" y="118" textLength="88" lengthAdjust="spacingAndGlyphs">контроль станка</text>
<text x="729" y="105" textLength="52.600" lengthAdjust="spacingAndGlyphs">Проверка</text>
<text x="786.500" y="105" textLength="65.700" lengthAdjust="spacingAndGlyphs">Ограничить</text>
<text x="867" y="105" textLength="42.400" lengthAdjust="spacingAndGlyphs">Удалить</text>
<text x="857.500" y="118" textLength="61" lengthAdjust="spacingAndGlyphs">выбранные</text>
<text x="944.500" y="72" textLength="52.700" lengthAdjust="spacingAndGlyphs">Разделить</text>
<text x="944.500" y="94" textLength="99.600" lengthAdjust="spacingAndGlyphs">Размещение точек</text>
<text x="944.500" y="116" textLength="98.800" lengthAdjust="spacingAndGlyphs">Обновить область</text>
<text x="1084" y="105" textLength="74.300" lengthAdjust="spacingAndGlyphs">Использовать</text>
<text x="1061.600" y="118" textLength="120" lengthAdjust="spacingAndGlyphs">векторы из симуляции</text>
<text x="1102.400" y="137" textLength="36.300" lengthAdjust="spacingAndGlyphs">Опции</text>
<text x="1197.600" y="105" textLength="59" lengthAdjust="spacingAndGlyphs">Изменения</text>
<text x="1204.500" y="137" textLength="44" lengthAdjust="spacingAndGlyphs">История</text>

<!-- status bar -->
<rect x="0" y="1007" width="1920" height="29" fill="#f0f0f0"/>
<rect x="0" y="1007" width="1920" height="1" fill="#cfcfcf"/>
<path d="M7,1036V1015M8,1034L25,1016M6,1035H22" stroke="#2a9ad8" fill="none"/><path d="M8,1034L25,1016" stroke="#2aa050"/><rect x="24" y="1012" width="3" height="3" fill="#2a8ad8"/><path d="M6,1035H22" stroke="#d83030"/><path d="M27,1030l-5,6h5z" fill="#111"/>
<rect x="32" y="1013" width="88" height="23" fill="#e6e6e6"/>
<text x="35" y="1029" textLength="52" lengthAdjust="spacingAndGlyphs">2 установ</text>
<path d="M108,1023l4,4 4-4" fill="none" stroke="#666"/>
<path d="M129,1022l7-6v13l-7,5zM136,1016l6,6v11l-6-4" fill="#6ab0e8" stroke="#5090c0" stroke-width=".6"/><text x="141" y="1027" style="font-size:10px;fill:#1a7ad0">X</text>
<path d="M155,1030l8-6 8,6M163,1024v-9" fill="none" stroke="#666" stroke-width="1.500"/><path d="M158,1021l5-6 5,6z" fill="#6ab0e8"/><text x="160" y="1036" style="font-size:9px;fill:#1a7ad0">Y</text>
<rect x="178" y="1013" width="24" height="23" fill="#b5d7f5" stroke="#8ebde6"/><path d="M182,1030l8-7 8,7-8,6z" fill="#4a90d0"/><path d="M190,1023v-7" stroke="#555"/><text x="181" y="1023" style="font-size:9px;fill:#1a7ad0">Z</text>
<path d="M208,1017c3-3,7-3,7,0v2h-5v4" fill="none" stroke="#222" stroke-width="1.500"/><rect x="211" y="1024" width="11" height="11" fill="#777" stroke="#222"/><path d="M211,1028h11M211,1031h11" stroke="#ddd"/>
<path d="M245,1015h19M245,1020h19M245,1025h19M245,1030h19M245,1035h19M245,1015v20M250,1015v20M255,1015v20M259,1015v20M264,1015v20" stroke="#d4d4d4"/>
<g fill="#f0f0f0" stroke="#8a8a8a">
<rect x="269" y="1013.500" width="53" height="24" stroke="#dedede"/>
<rect x="335.500" y="1013.500" width="56" height="24"/><rect x="395.500" y="1013.500" width="56" height="24"/><rect x="455.500" y="1013.500" width="56" height="24"/>
<rect x="569.500" y="1013.500" width="88" height="24" stroke="#dedede"/>
<rect x="735.500" y="1013.500" width="56" height="24"/><rect x="821.500" y="1013.500" width="56" height="24"/><rect x="907.500" y="1013.500" width="56" height="24"/><rect x="993.500" y="1013.500" width="56" height="24"/><rect x="1079.500" y="1013.500" width="56" height="24"/><rect x="1165.500" y="1013.500" width="56" height="24"/>
</g>
<text x="341" y="1028" textLength="39" lengthAdjust="spacingAndGlyphs">12,0915</text>
<text x="401.600" y="1028" textLength="38" lengthAdjust="spacingAndGlyphs">-33,636</text>
<text x="462.400" y="1028" textLength="10" lengthAdjust="spacingAndGlyphs">-8</text>
<rect x="518" y="1016" width="19" height="19" fill="#f4f4f4" stroke="#ccc"/><text x="520" y="1024" style="font-size:7px;fill:#bbb">X</text><text x="520" y="1030" style="font-size:7px;fill:#bbb">Y</text><path d="M526,1022h9M526,1027h9M526,1032h9" stroke="#ccc"/>
<path d="M548,1031l12-11" stroke="#ccc"/><circle cx="548" cy="1031" r="2.500" fill="#fff" stroke="#ccc"/><circle cx="560" cy="1018" r="2.500" fill="#ccc"/>
<rect x="674" y="1016" width="12" height="20" fill="#d8d8d8" stroke="#888"/><path d="M676,1019h8M676,1024h8M676,1028h8M676,1032h8" stroke="#888" stroke-dasharray="2 1"/><rect x="686" y="1026" width="3" height="10" fill="#1a8ae0"/><rect x="691" y="1026" width="3" height="10" fill="#1a8ae0"/>
<path d="M711,1017v9h20v-9M715,1023v-4M720,1023v-5M725,1023v-4" fill="none" stroke="#1a7ad0"/><text x="709" y="1036" textLength="23" lengthAdjust="spacing" style="font-size:10px;fill:#1a7ad0">0 1 2</text>
<text x="741" y="1029" textLength="18" lengthAdjust="spacingAndGlyphs" style="font-size:11px">мм</text>
<circle cx="808" cy="1025" r="8" fill="none" stroke="#2a7ad0" stroke-width="1.300"/><path d="M798,1025h20M808,1015v20" stroke="#2a7ad0"/>
<text x="827.300" y="1028" textLength="25.700" lengthAdjust="spacingAndGlyphs">0,001</text>
<path d="M889,1017h10l-1,12h-8zM893,1029v7" fill="none" stroke="#2a8ad8" stroke-width="1.200"/><path d="M883,1026h5v3h-5z" fill="none" stroke="#2a8ad8" stroke-dasharray="1 1"/>
<text x="913.500" y="1028" textLength="13.500" lengthAdjust="spacingAndGlyphs">0,1</text>
<path d="M969,1027h5M977,1032c5,0 6-5 5-7s-1-4 2-6" fill="none" stroke="#2a8ad8" stroke-width="1.400"/>
<text x="999.200" y="1028" textLength="14.700" lengthAdjust="spacingAndGlyphs">0,0</text>
<circle cx="1064" cy="1026" r="6.500" fill="none" stroke="#2a7ad0" stroke-width="1.300"/><path d="M1057,1035l14-18" stroke="#2a7ad0" stroke-width="1.300"/>
<text x="1085" y="1028" textLength="15" lengthAdjust="spacingAndGlyphs">6,0</text>
<path d="M1159,1018l-13,13" stroke="#2a8ad8" stroke-width="1.300"/><path d="M1144,1033l7-1-5-6z" fill="#2a8ad8"/><path d="M1141,1026c0,4 1,7 5,9" fill="none" stroke="#2a8ad8"/>
<text x="1170.600" y="1028" textLength="15.500" lengthAdjust="spacingAndGlyphs">0,0</text>
<path d="M1009,983v22" stroke="#333" stroke-dasharray="1 2"/>

<!-- dialog -->
<rect x="1062" y="146" width="642" height="692" fill="#000" fill-opacity=".12" filter="url(#bb)"/>
<rect x="1065.500" y="148.500" width="634" height="686" fill="#f0f0f0" stroke="#0078d7"/>
<rect x="1065" y="148" width="635" height="30.500" fill="#0078d7"/>
<rect x="1076" y="157" width="13" height="14" rx="2" fill="url(#pi)"/><text x="1079" y="166" style="font-size:10px;fill:#fff;font-weight:bold">P</text>
<text x="1095.700" y="168" textLength="115.300" lengthAdjust="spacingAndGlyphs" style="fill:#fff">По профилю кривой</text>
<text x="1629" y="168" style="fill:#fff">?</text>
<path d="M1672,158l10,10M1682,158l-10,10" stroke="#fff" stroke-width="1.200"/>
<rect x="1076.500" y="189.500" width="31" height="31" fill="#dcdcdc" stroke="#b8b8b8"/>
<path d="M1085,197l7-3 7,4-4,4h-6zM1083,205l5-3 4,6-3,5-6-3zM1101,204l-5-2-3,6 4,5 5-4z" fill="#eef2f4" stroke="#444"/>
<rect x="1113.500" y="189.500" width="31" height="31" fill="#dcdcdc" stroke="#b8b8b8"/>
<rect x="1117" y="193" width="12" height="23" fill="#efe8d8" stroke="#444"/><rect x="1129" y="196" width="12" height="22" fill="#efe8d8" stroke="#444"/><path d="M1120,196l6,5-6,5 6,6M1132,200l6,5-6,5 6,5" fill="none" stroke="#d83040" stroke-width="2.600"/><path d="M1124,195l3,3M1120,208l3,-3M1136,199l3,3M1132,212l3,-3" fill="none" stroke="#2a5ac0" stroke-width="2.600"/>
<text x="1226" y="207" textLength="90" lengthAdjust="spacingAndGlyphs" style="fill:#111">Имя траектории</text>
<rect x="1326.500" y="193.500" width="359" height="23" fill="#fff" stroke="#7a7a7a"/>
<text x="1332" y="208" textLength="126" lengthAdjust="spacingAndGlyphs" style="fill:#111">Подшипник доработка</text>
<rect x="1076.500" y="231.500" width="239" height="441" fill="#fff" stroke="#828282"/>
<rect x="1298" y="232" width="17" height="424" fill="#f0f0f0"/><rect x="1298" y="250" width="15" height="255" fill="#cdcdcd"/>
<path d="M1302,244l4-4 4,4M1302,645l4,4 4-4" fill="none" stroke="#555" stroke-width="1.500"/>
<rect x="1077" y="656" width="238" height="16" fill="#f0f0f0"/><rect x="1095" y="656" width="158" height="15" fill="#cdcdcd"/>
<path d="M1089,660l-4,4 4,4M1287,660l4,4-4,4" fill="none" stroke="#555" stroke-width="1.500"/>
<!-- dialog tree -->
<path class="dot" d="M1089.500,233V656M1109,338V494M1109,590V602M1109,626V656"/>
<path class="dot" d="M1090,242h9M1090,260h9M1090,278h9M1090,296h9M1090,314h9M1094,332h5M1109,350h9M1109,368h9M1109,386h9M1109,404h9M1109,422h9M1109,440h9M1109,458h9M1109,476h9M1109,494h9M1090,512h9M1090,530h9M1090,548h9M1090,566h9M1094,584h5M1109,602h9M1094,620h5M1109,638h9"/>
<use href="#mn" x="1085" y="327.500" width="9" height="9"/><use href="#mn" x="1085" y="579.500" width="9" height="9"/><use href="#mn" x="1085" y="615.500" width="9" height="9"/>
<use href="#cs" x="1100" y="234" width="16" height="16"/>
<path d="M1100,256l4-4h12v12l-4,4h-12z" fill="#8cc4ee" stroke="#4a90c8"/><path d="M1100,256h12v12M1112,256l4-4" fill="none" stroke="#4a90c8"/>
<rect x="1102" y="270" width="11" height="15" fill="#e8c53a" stroke="#6a5a10"/><path d="M1107.500,270v15" stroke="#fff0a0"/>
<use href="#ml" x="1100" y="288" width="16" height="16"/>
<g transform="translate(0,8)"><path d="M1103,306l6-3 6,1-2,9-8,2-3-5z" fill="#fff" stroke="#2a8ab0"/><path d="M1109,304h6v8h-6z" fill="none" stroke="#666"/><path d="M1110,306l4,5" stroke="#d8a820" stroke-width="2"/></g>
<use href="#cv" x="1100" y="324" width="16" height="16"/>
<path d="M1121,343h4v8h-4zM1129,343h4v8h-4zM1121,355h12" fill="#e8c53a" stroke="#222"/>
<path d="M1121,366l7-3 7,2-2,7-8,2z" fill="#7ec8cc" stroke="#2a7a8a"/><path d="M1126,360h4v9h-4z" fill="#e8c53a"/>
<path d="M1120,394l14-14-2,9h3v5z" fill="#222"/><path d="M1120,394h15" stroke="#2a7ad0" stroke-width="1.500"/><path d="M1120,393l14-14" stroke="#2a7ad0"/>
<path d="M1121,409c0-8,14-8,14,0z" fill="#5cc07a"/><path d="M1120,409h16" stroke="#bbb"/>
<path d="M1120,421h5l2,3h3l2,3h4v4h-7l-2-3h-3l-2-3h-2z" fill="#7c2a2a"/>
<rect x="1122" y="433" width="4" height="13" fill="#e8c53a" stroke="#222"/><path d="M1128,436h8M1128,439h6M1128,442h4" stroke="#222"/><path d="M1121,433h6" stroke="#222" stroke-width="2"/>
<path d="M1120,452h15l-7.500,7zM1120,468h15l-7.500-8z" fill="#8cd0ec" stroke="#222" stroke-width=".8"/>
<path d="M1125,470h6v7l-2,4h-2l-2-4z" fill="#d8a820" stroke="#777" stroke-width=".5"/><path d="M1122,480c2,5 9,5 11,0" fill="none" stroke="#2ab050" stroke-width="2"/>
<rect x="1121" y="487" width="6" height="14" fill="#d8a820" stroke="#222"/><rect x="1127" y="491" width="7" height="12" fill="#c04028" stroke="#222"/>
<rect x="1103" y="504" width="9" height="15" fill="#f2e88a" stroke="#111" stroke-dasharray="2 1"/>
<path d="M1102,522l14,14" stroke="#6a8ac0" stroke-width="2"/><g fill="#a02020"><circle cx="1101" cy="529" r="2.500"/><circle cx="1107" cy="523" r="2.500"/><circle cx="1108" cy="537" r="2.500"/><circle cx="1115" cy="530" r="2.500"/></g>
<path d="M1102,542v13h14" fill="none" stroke="#3a9ad8" stroke-width="1.600"/><path d="M1103,554l11-11" stroke="#d8a820" stroke-width="3"/><path d="M1100,555l5-5v5z" fill="#3a9ad8"/>
<circle cx="1108" cy="566" r="6.500" fill="#f0c830" stroke="#222"/><path d="M1104,570l8-8" stroke="#2a5ab0" stroke-width="2"/>
<path d="M1100,578h13M1100,583h11" stroke="#d83030" stroke-width="1.500"/><path d="M1100,588h13" stroke="#d83030" stroke-width="1.500"/><path d="M1109,577h6l1,8-4,5-3-5z" fill="#d8a820" stroke="#777" stroke-width=".5"/>
<path d="M1119,596h13M1119,601h11M1119,606h13" stroke="#d83030" stroke-width="1.500"/><path d="M1128,595h6l1,8-4,5-3-5z" fill="#d8a820" stroke="#777" stroke-width=".5"/>
<path d="M1100,613v7c0,5 3,7 7,7h3c4,0 7-2 7-7v-7h-2v8c0,3-3,4-5,3h-3c-2,1-5 0-5-3v-8z" fill="#9adf5a"/><rect x="1104" y="611" width="9" height="13" fill="#d8a820"/>
<path d="M1120,631v7c0,5 3,7 7,7h3c4,0 7-2 7-7v-7h-2v8c0,3-3,4-5,3h-3c-2,1-5 0-5-3v-8z" fill="#9adf5a"/><rect x="1124" y="629" width="9" height="13" fill="#d8a820"/>
<path d="M1120,649v7h2v-7zM1135,649v7h2v-7z" fill="#3ab0d8"/><rect x="1124" y="647" width="9" height="9" fill="#d8a820"/>
<rect x="1138.300" y="341" width="94" height="18" fill="#0078d7" stroke="#111" stroke-dasharray="1 1"/>
<g style="fill:#111">
<text x="1121" y="246" textLength="77" lengthAdjust="spacingAndGlyphs">Локальная СК</text>
<text x="1121" y="264" textLength="54.700" lengthAdjust="spacingAndGlyphs">Заготовка</text>
<text x="1121" y="282" textLength="67" lengthAdjust="spacingAndGlyphs">Инструмент</text>
<text x="1121" y="300" textLength="39" lengthAdjust="spacingAndGlyphs">Станок</text>
<text x="1121" y="318" textLength="66" lengthAdjust="spacingAndGlyphs">Ограничить</text>
<text x="1121" y="336" textLength="115.700" lengthAdjust="spacingAndGlyphs">По профилю кривой</text>
<text x="1140.300" y="354" textLength="91" lengthAdjust="spacingAndGlyphs" style="fill:#fff">Шаги обработки</text>
<text x="1140.300" y="372" textLength="50.300" lengthAdjust="spacingAndGlyphs">Чистовая</text>
<text x="1140.300" y="390" textLength="33.300" lengthAdjust="spacingAndGlyphs">Уклон</text>
<text x="1140.300" y="408" textLength="59.700" lengthAdjust="spacingAndGlyphs">Смещение</text>
<text x="1140.300" y="426" textLength="95.700" lengthAdjust="spacingAndGlyphs">Подбор ступеней</text>
<text x="1140.300" y="444" textLength="141.300" lengthAdjust="spacingAndGlyphs">Высокоскоростная (HSM)</text>
<text x="1140.300" y="462" textLength="47.700" lengthAdjust="spacingAndGlyphs">Порядок</text>
<text x="1140.300" y="480" textLength="39.700" lengthAdjust="spacingAndGlyphs">Подход</text>
<text x="1140.300" y="498" textLength="144.300" lengthAdjust="spacingAndGlyphs">Автоматическая проверка</text>
<text x="1121" y="516" textLength="133.700" lengthAdjust="spacingAndGlyphs">Коррекция инструмента</text>
<text x="1121" y="534" textLength="104" lengthAdjust="spacingAndGlyphs">Размещение точек</text>
<text x="1121" y="552" textLength="94.700" lengthAdjust="spacingAndGlyphs">Ось инструмента</text>
<text x="1121" y="570" textLength="142.700" lengthAdjust="spacingAndGlyphs">Управление осями станка</text>
<text x="1121" y="588" textLength="98" lengthAdjust="spacingAndGlyphs">Ускоренные ходы</text>
<text x="1140.300" y="606" textLength="131.300" lengthAdjust="spacingAndGlyphs">Перемещения и зазоры</text>
<text x="1121" y="624" textLength="115.700" lengthAdjust="spacingAndGlyphs">Подводы и переходы</text>
<text x="1140.300" y="642" textLength="40.700" lengthAdjust="spacingAndGlyphs">Подвод</text>
</g>
<svg x="1140" y="649" width="100" height="7"><text x="0.300" y="11" textLength="38" lengthAdjust="spacingAndGlyphs" style="fill:#111">Отвод</text></svg>
<!-- illustration -->
<g transform="translate(1060,480) scale(.3333)">
<ellipse cx="425" cy="900" rx="190" ry="45" fill="#444" fill-opacity=".85" filter="url(#bb2)"/>
<path d="M230,775L405,815V928L232,878Z" fill="url(#bxf)" stroke="#555"/>
<path d="M405,815L625,762L622,860L405,928Z" fill="url(#bxf)" stroke="#555"/>
<path d="M232,878L455,820L622,860M455,738V820" fill="none" stroke="#777"/>
<path d="M230,775L455,738L625,762L405,815Z" fill="#dcc8f6" stroke="#7a48b0" stroke-width="3"/>
<path d="M230,775L405,815L625,762L590,755L405,790L270,765Z" fill="#c9a6ee"/>
<path d="M228,748L455,718L630,742L405,770Z" fill="#a8a8a8" fill-opacity=".8"/>
<path d="M228,718L455,690L630,710L405,740Z" fill="#a8a8a8" fill-opacity=".8"/>
<path d="M228,687L455,658L630,678L405,710Z" fill="#a8a8a8" fill-opacity=".8"/>
<path d="M593,598h40v50h-8v40l-25,10l-7-45z" fill="#c8c4c0" stroke="#999"/><path d="M600,650l20,30M600,665l20,20" stroke="#777"/>
<g stroke="#222" stroke-width="2.500" fill="#111">
<path d="M143,693h80M146,793l84-14M158,693v100M195,724v45M190,722l40-4M630,745l45,4M630,763l45,5M657,705v38M654,768v38" fill="none"/>
<path d="M158,693l-8,20h16zM158,793l-8-20h16zM195,724l-7,16h14zM195,770l-7-16h14zM193,688l-7-18h14zM657,745l-7-18h14zM654,768l-7,18h14z"/>
<path d="M193,635v35" fill="none"/>
</g>
<text x="184" y="628" style="font-size:30px;fill:#111">t</text><text x="120" y="755" style="font-size:34px;fill:#111">d</text><text x="651" y="690" style="font-size:30px;fill:#111">f</text>
</g>
<!-- header -->
<path d="M1326.500,263.500V238q0-4.500 4.500-4.500H1681q4.500 0 4.500 4.500V263.500Z" fill="url(#gh)" stroke="#1c2a3a"/>
<text x="1330.300" y="256" textLength="130" lengthAdjust="spacingAndGlyphs" style="font-size:17px;fill:#111">Шаги обработки</text>
<!-- groups -->
<rect x="1337.500" y="295.500" width="311" height="123" fill="none" stroke="#dcdcdc"/>
<rect x="1344" y="290" width="75" height="12" fill="#f0f0f0"/>
<text x="1346" y="300" textLength="70.300" lengthAdjust="spacingAndGlyphs" style="fill:#111">Вертикально</text>
<text class="g" x="1347.700" y="318" textLength="45" lengthAdjust="spacingAndGlyphs">Область</text>
<text class="g u" x="1500.300" y="318" textLength="63.400" lengthAdjust="spacingAndGlyphs">Глубина (d)</text>
<rect x="1347.500" y="327.500" width="134" height="22" fill="#fbfbfb" stroke="#d2d2d2"/><rect x="1349" y="329" width="114" height="19" fill="#e6e6e6"/>
<text class="d" x="1352.300" y="342" textLength="45.500" lengthAdjust="spacingAndGlyphs">Глубина</text><path d="M1469,336l4,4 4-4" fill="none" stroke="#aaa"/>
<rect x="1500.500" y="327.500" width="59" height="19" fill="#eee" stroke="#d2d2d2"/>
<text class="d" x="1506.300" y="341" textLength="15" lengthAdjust="spacingAndGlyphs">5,0</text>
<text class="g u" x="1347.300" y="370" textLength="63.400" lengthAdjust="spacingAndGlyphs">Шаг по Z (t)</text>
<rect x="1347.500" y="379.500" width="23" height="23" fill="#c7e0f7" stroke="#24609a"/><use href="#hd" x="1349" y="380" width="20" height="20"/>
<rect x="1383.500" y="382.500" width="59" height="19" fill="#eee" stroke="#d2d2d2"/>
<text class="d" x="1389.300" y="396" textLength="15" lengthAdjust="spacingAndGlyphs">5,0</text>
<rect x="1337.500" y="435.500" width="311" height="118" fill="none" stroke="#dcdcdc"/>
<rect x="1344" y="430" width="88" height="12" fill="#f0f0f0"/>
<text x="1346" y="440" textLength="83.700" lengthAdjust="spacingAndGlyphs" style="fill:#111">Горизонтально</text>
<text class="g" x="1347.700" y="457" textLength="45" lengthAdjust="spacingAndGlyphs">Область</text>
<text class="g u" x="1500.300" y="457" textLength="44.400" lengthAdjust="spacingAndGlyphs">Ширина</text>
<rect x="1347.500" y="465.500" width="134" height="22" fill="#fbfbfb" stroke="#d2d2d2"/><rect x="1349" y="467" width="114" height="19" fill="#e6e6e6"/>
<text class="d" x="1352.300" y="480" textLength="44.400" lengthAdjust="spacingAndGlyphs">Ширина</text><path d="M1469,474l4,4 4-4" fill="none" stroke="#aaa"/>
<rect x="1500.500" y="465.500" width="59" height="19" fill="#eee" stroke="#d2d2d2"/>
<text class="d" x="1506.300" y="479" textLength="15" lengthAdjust="spacingAndGlyphs">0,1</text>
<text class="g u" x="1347.300" y="506" textLength="21.700" lengthAdjust="spacingAndGlyphs">Шаг</text>
<rect x="1347.500" y="515.500" width="23" height="23" fill="#c7e0f7" stroke="#24609a"/><use href="#hd" x="1349" y="516" width="20" height="20"/>
<rect x="1383.500" y="520.500" width="59" height="19" fill="#eee" stroke="#d2d2d2"/>
<text class="d" x="1389" y="534" textLength="21" lengthAdjust="spacingAndGlyphs">0,05</text>
<!-- buttons -->
<rect x="1327.500" y="805.500" width="71" height="20" fill="#ccc" stroke="#bfbfbf"/>
<text x="1333" y="820" textLength="60" lengthAdjust="spacingAndGlyphs" style="fill:#8a8a8a">Вычислить</text>
<rect x="1409.500" y="805.500" width="73" height="20" fill="#ccc" stroke="#bfbfbf"/>
<text x="1418" y="820" textLength="55" lengthAdjust="spacingAndGlyphs" style="fill:#8a8a8a">В очередь</text>
<rect x="1491.500" y="805.500" width="58" height="20" fill="#ccc" stroke="#bfbfbf"/>
<text x="1513" y="820" textLength="15" lengthAdjust="spacingAndGlyphs" style="fill:#8a8a8a">ОК</text>
<rect x="1559.500" y="805.500" width="58" height="20" fill="#e4e4e4" stroke="#0a5a9a" stroke-width="1.500"/>
<text x="1565" y="820" textLength="46" lengthAdjust="spacingAndGlyphs" style="fill:#111">Закрыть</text>
</svg>
</body></html>
